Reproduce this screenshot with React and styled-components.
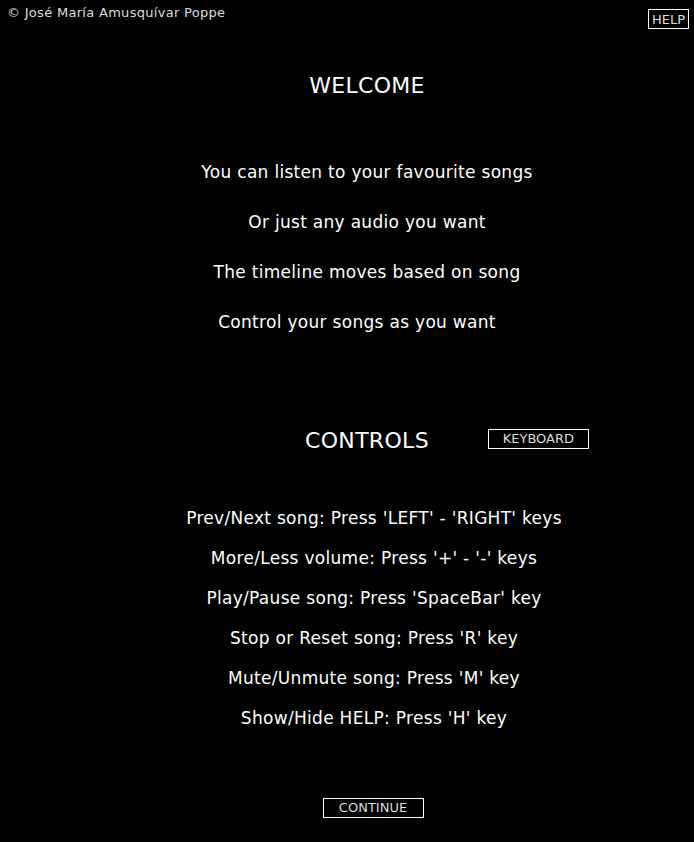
import React from "react";
import styled, { createGlobalStyle } from "styled-components";

const GlobalStyle = createGlobalStyle`
  html, body {
    margin: 0;
    padding: 0;
    background: #000;
  }
  body {
    font-family: "DejaVu Sans", "Open Sans", sans-serif;
    color: #fff;
  }
`;

const Page = styled.div`
  position: relative;
  width: 694px;
  height: 842px;
  background: #000;
  overflow: hidden;
`;

const TopBar = styled.div`
  display: flex;
  justify-content: space-between;
  align-items: flex-start;
  padding: 5px 5px 0 7px;
`;

const Copyright = styled.span`
  font-size: 13px;
  letter-spacing: 0.3px;
  color: #ddd;
  line-height: 16px;
`;

const BoxButton = styled.button`
  background: transparent;
  border: 1px solid #fff;
  color: #ddd;
  font-family: inherit;
  font-size: 13px;
  line-height: 1;
  height: 20px;
  width: ${(p) => (p.$w ? `${p.$w}px` : "auto")};
  padding: 0 3px;
  margin-top: ${(p) => p.$top || 0}px;
  cursor: pointer;
`;

const Content = styled.div`
  display: flex;
  flex-direction: column;
  align-items: center;
  padding-left: 40px;
`;

const Heading = styled.h1`
  margin: 0;
  font-weight: normal;
  font-size: 22px;
  letter-spacing: 0.3px;
`;

const WelcomeHeading = styled(Heading)`
  margin-top: 44px;
`;

const Lines = styled.div`
  display: flex;
  flex-direction: column;
  align-items: center;
  gap: ${(p) => p.$gap}px;
  margin-top: ${(p) => p.$top}px;
  padding-left: ${(p) => p.$indent || 0}px;
`;

const Line = styled.p`
  margin: 0;
  font-size: 17px;
  line-height: 20px;
  letter-spacing: 0.3px;
  padding-right: ${(p) => p.$shift || 0}px;
`;

const ControlsRow = styled.div`
  display: grid;
  grid-template-columns: 1fr auto 1fr;
  align-items: center;
  width: 100%;
  margin-top: 96px;
`;

const RowEnd = styled.div`
  align-self: start;
  padding-left: 59px;
`;

const ContinueWrap = styled.div`
  margin-top: 69px;
  padding-left: 12px;
`;

const welcome = [
  ["You can listen to your favourite songs", 0],
  ["Or just any audio you want", 0],
  ["The timeline moves based on song", 0],
  ["Control your songs as you want", 20],
];

const controls = [
  "Prev/Next song: Press 'LEFT' - 'RIGHT' keys",
  "More/Less volume: Press '+' - '-' keys",
  "Play/Pause song: Press 'SpaceBar' key",
  "Stop or Reset song: Press 'R' key",
  "Mute/Unmute song: Press 'M' key",
  "Show/Hide HELP: Press 'H' key",
];

export default function App() {
  return (
    <Page>
      <GlobalStyle />
      <TopBar>
        <Copyright>© José María Amusquívar Poppe</Copyright>
        <BoxButton $top={4}>HELP</BoxButton>
      </TopBar>
      <Content>
        <WelcomeHeading>WELCOME</WelcomeHeading>
        <Lines $gap={30} $top={64}>
          {welcome.map(([t, s]) => (
            <Line key={t} $shift={s}>
              {t}
            </Line>
          ))}
        </Lines>
        <ControlsRow>
          <div />
          <Heading>CONTROLS</Heading>
          <RowEnd>
            <BoxButton $w={101}>KEYBOARD</BoxButton>
          </RowEnd>
        </ControlsRow>
        <Lines $gap={20} $top={55} $indent={14}>
          {controls.map((t) => (
            <Line key={t}>{t}</Line>
          ))}
        </Lines>
        <ContinueWrap>
          <BoxButton $w={101}>CONTINUE</BoxButton>
        </ContinueWrap>
      </Content>
    </Page>
  );
}
